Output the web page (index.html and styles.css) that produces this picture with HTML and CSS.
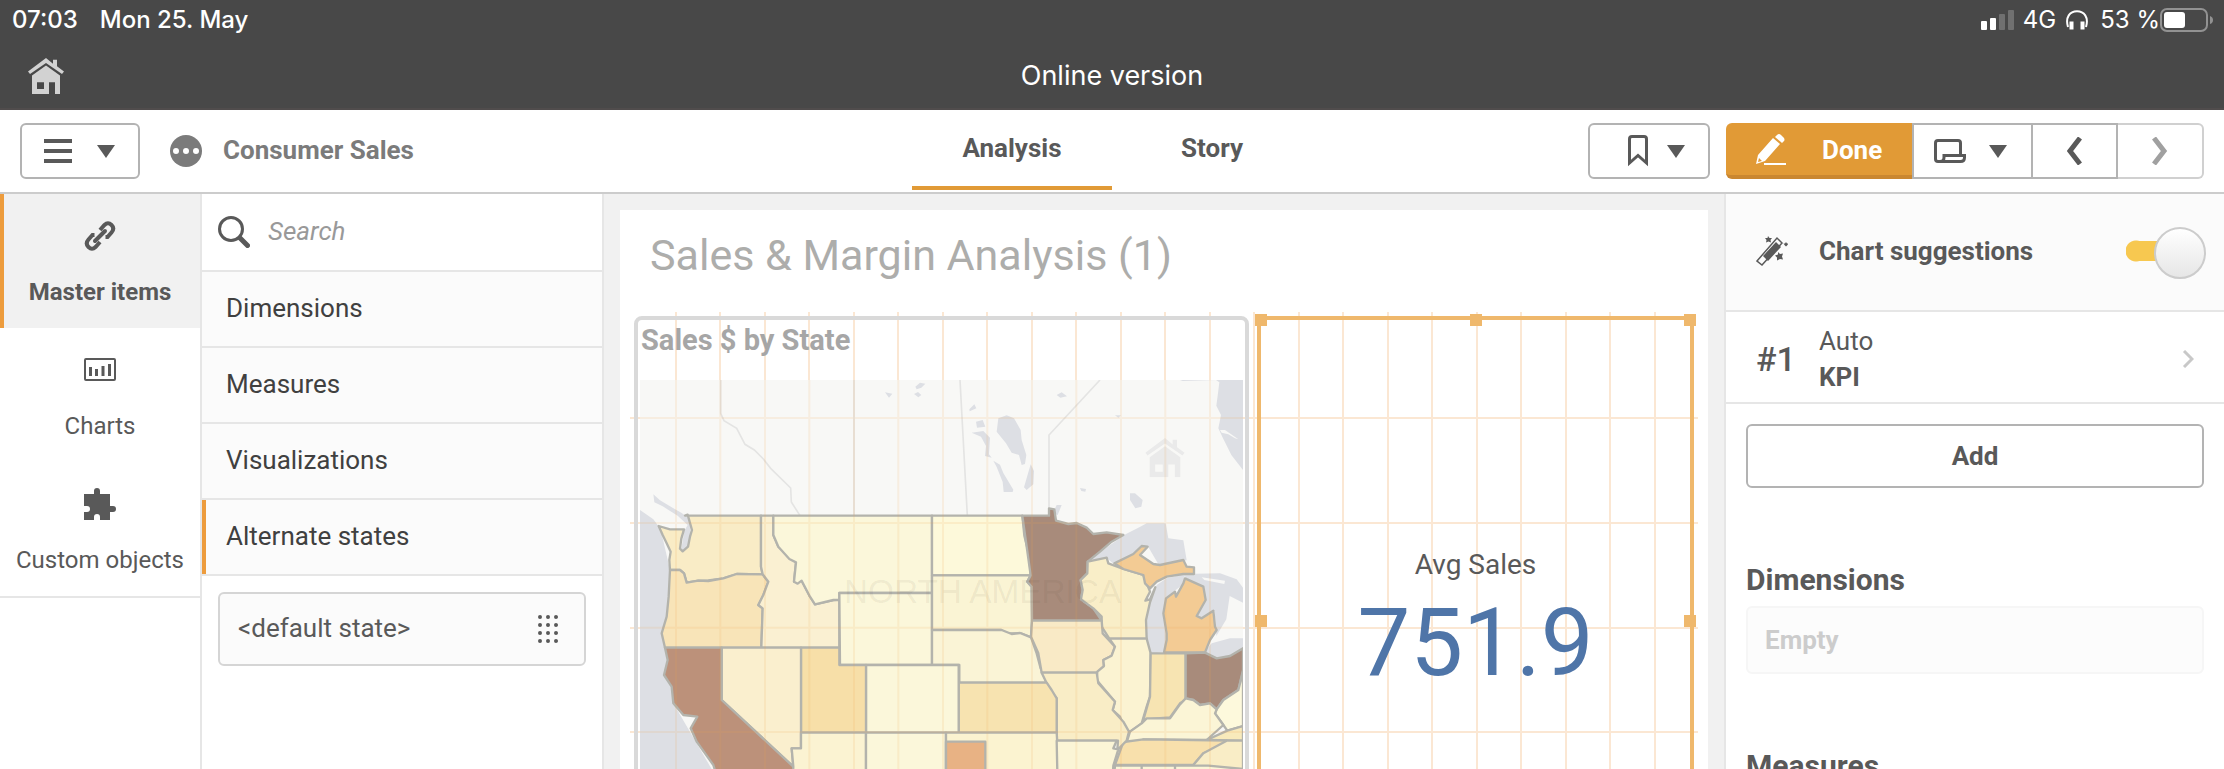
FILE: index.html
```html
<!DOCTYPE html>
<html lang="en">
<head>
<meta charset="utf-8">
<title>Consumer Sales</title>
<link rel="stylesheet" href="styles.css">
</head>
<body>
<svg width="0" height="0" class="defs" aria-hidden="true">
  <symbol id="house" viewBox="0 0 36 43" preserveAspectRatio="none">
    <path d="M18 0 0 16l2 3L18 6l16 13 2-3-7-6V2h-4v5z"/>
    <path fill-rule="evenodd" d="M18 9 4 21v22h28V21zM9 29h7v8H9zM21 29h6v14h-6z"/>
  </symbol>
  <symbol id="caret" viewBox="0 0 18 13"><path d="M0 0h18L9 13z"/></symbol>
</svg>

<header class="top">
  <div class="status">
    <div class="status-side"><span>07:03</span><span>Mon 25. May</span></div>
    <div class="status-side status-right">
      <svg width="34" height="20" viewBox="0 0 34 20" fill="#fff"><rect y="11" width="6" height="9" rx="1"/><rect x="9" y="8" width="6" height="12" rx="1"/><g opacity=".22"><rect x="18" y="4" width="6" height="16" rx="1"/><rect x="27" width="6" height="20" rx="1"/></g></svg>
      <span>4G</span>
      <svg class="headphones" width="22" height="20" viewBox="0 0 22 20" fill="none" stroke="#fff"><path d="M2 17C-1 7 4 1.200 11 1.200S23 7 20 17" stroke-width="2"/><path d="M5.500 11.500v8M16.500 11.500v8" stroke-width="4"/></svg>
      <span class="percent">53 %</span>
      <svg width="54" height="24" viewBox="0 0 54 24"><rect x="1" y="1" width="46" height="22" rx="6" fill="none" stroke="#929292" stroke-width="2"/><rect x="4" y="4" width="21" height="16" rx="3" fill="#fff"/><path d="M50 8q3 1 3 4t-3 4z" fill="#929292"/></svg>
    </div>
  </div>
  <div class="titlebar">
    <a class="home" href="#" aria-label="Home"><svg width="36" height="36"><use href="#house"/></svg></a>
    <h1>Online version</h1>
  </div>
</header>

<div class="toolbar">
  <div class="tools-left">
    <button class="btn menu" aria-label="Menu"><svg width="28" height="24" viewBox="0 0 28 24"><path d="M0 2h28M0 12h28M0 22h28" stroke="#595959" stroke-width="4"/></svg><svg width="18" height="13"><use href="#caret"/></svg></button>
    <svg width="32" height="32" viewBox="0 0 32 32"><circle cx="16" cy="16" r="16" fill="#7b7b7b"/><g fill="#fff"><circle cx="6" cy="16" r="3"/><circle cx="16" cy="16" r="3"/><circle cx="26" cy="16" r="3"/></g></svg>
    <span class="app-name">Consumer Sales</span>
  </div>
  <nav class="tabs"><a class="tab active" href="#">Analysis</a><a class="tab" href="#">Story</a></nav>
  <div class="tools-right">
    <button class="btn bookmark" aria-label="Bookmarks"><svg width="20" height="32" viewBox="0 0 20 32"><path d="M1.500 28V4q0-2.500 2.500-2.500h12q2.500 0 2.500 2.500v24L10 20.500z" fill="none" stroke="#595959" stroke-width="3"/></svg><svg width="18" height="13"><use href="#caret"/></svg></button>
    <div class="group">
      <button class="btn done"><svg width="32" height="32" viewBox="0 0 32 32" fill="#fff"><path fill-rule="evenodd" d="M0 30 2 21 17 4l7 6L9 27zM3 24l-1 4 4-1z"/><path d="m19 3 2-2q2-2 4 0l3 3q1 2 0 3l-2 2z"/><path d="M8 29h22v2H8z"/></svg><span>Done</span></button>
      <button class="btn sheets" aria-label="Sheets"><svg width="32" height="24" viewBox="0 0 32 24" fill="none" stroke="#595959" stroke-width="3"><path d="M6 22.500H4q-2.500 0-2.500-2.500V4Q1.500 1.500 4 1.500h20q2.500 0 2.500 2.500v12"/><path d="M10 16.500h20.500v2q0 4-4 4H6q4 0 4-4z"/></svg><svg width="18" height="13"><use href="#caret"/></svg></button>
      <button class="btn step prev" aria-label="Previous sheet"><svg width="16" height="28" viewBox="0 0 16 28"><path d="M13 1 3 14l10 13" fill="none" stroke="#595959" stroke-width="5"/></svg></button>
      <button class="btn step off" aria-label="Next sheet"><svg width="16" height="28" viewBox="0 0 16 28"><path d="m2 1 10 13L2 27" fill="none" stroke="#a0a0a0" stroke-width="5"/></svg></button>
    </div>
  </div>
</div>

<main class="work">
  <nav class="rail">
    <a class="rail-item active" href="#"><svg width="32" height="32" viewBox="0 0 32 32" fill="none" stroke="#595959" stroke-width="4"><path d="M11 21 21 11" stroke-linecap="round"/><path d="m16 10 4.500-5q3.500-3.500 7 0t0 7.500l-4 4.500h-2M16 22l-4.500 5q-3.500 3.500-7 0t0-7.500l4-4.500h2"/></svg><span>Master items</span></a>
    <a class="rail-item" href="#"><svg width="32" height="32" viewBox="0 0 32 32"><rect x="1" y="5" width="30" height="21" rx="1" fill="none" stroke="#595959" stroke-width="2"/><path d="M6.500 13v9M12.500 15v7M19 12v10M25.500 10v12" stroke="#595959" stroke-width="3"/></svg><span>Charts</span></a>
    <a class="rail-item" href="#"><svg width="32" height="32" viewBox="0 0 32 32" fill="#595959"><path d="M0 6h10V3q0-3 3-3t3 3v3h10v12h3q3 0 3 3t-3 3h-3v8H16v-3q0-3-3-3t-3 3v3H0v-8h3q3 0 3-3t-3-3H0z"/></svg><span>Custom objects</span></a>
  </nav>

  <section class="assets">
    <label class="search"><svg width="32" height="32" viewBox="0 0 32 32" fill="none" stroke="#595959"><circle cx="13" cy="13" r="11.500" stroke-width="3"/><path d="m22 22 7.500 7.500" stroke-width="5" stroke-linecap="round"/></svg><input type="search" placeholder="Search" aria-label="Search"></label>
    <button class="row">Dimensions</button>
    <button class="row">Measures</button>
    <button class="row">Visualizations</button>
    <button class="row open">Alternate states</button>
    <div class="state"><span>&lt;default state&gt;</span>
      <svg width="20" height="28" viewBox="0 0 20 28"><path d="M2 2h.01M10 2h.01M18 2h.01M2 10h.01M10 10h.01M18 10h.01M2 18h.01M10 18h.01M18 18h.01M2 26h.01M10 26h.01M18 26h.01" stroke="#595959" stroke-width="4" stroke-linecap="round"/></svg>
    </div>
  </section>

  <section class="stage">
    <div class="sheet">
      <h2>Sales &amp; Margin Analysis (1)</h2>
      <div class="board">
        <svg class="grid" viewBox="0 0 1068 640" preserveAspectRatio="none" aria-hidden="true"><path shape-rendering="crispEdges" d="M46 0v640M90 0v640M135 0v640M179 0v640M224 0v640M268 0v640M313 0v640M357 0v640M402 0v640M446 0v640M491 0v640M535 0v640M580 0v640M624 0v640M669 0v640M713 0v640M758 0v640M802 0v640M847 0v640M891 0v640M936 0v640M980 0v640M1025 0v640M0 106h1068M0 211h1068M0 316h1068M0 420h1068M0 525h1068"/></svg>
        <article class="card map-card">
          <h3>Sales $ by State</h3>
          <svg class="map" viewBox="60 30 1809 1620" preserveAspectRatio="xMinYMin slice" role="img" aria-label="Map of sales by state">
            <rect x="60" y="30" width="1809" height="1620" fill="#f8f8f6"/>
            <g fill="#dddfe4">
              <path d="M60 420 100 448 122 478 150 600 160 1000 300 1240H60z"/>
              <path d="m100 373 20 18 30 18 35 20 28 20-4 90-14 12-12-8 10-60 10-18-30-28-45-28-25-12z"/>
              <path d="M1680 30h189v270l-35-45-25-50-14-30 8-40-14-28 4-30 5-40-10-7-100 3z"/>
              <path d="m1135 145 25-9 22 9 20 35 3 30 14 45-4 27-10 3-8-30-22-7-17-28-28-35z"/>
              <path d="m1068 155 20-5 8 20-25 3zM1048 118l15-15 6 12-20 9zM1055 188l35-5 20 20-3 50 8 10-20-5 3-30-15-28zM1120 272l20 12 10 25 30 50-2 7h-27l-3-30-18-45zM1232 283l10 20-2 40-20 17-8-8 10-35zM1310 75l15-8 16 12-20 4zM1530 370l15 0 23 20-4 20-18 5-16-25zM1485 136h18l-8 7zM1380 354l18 3-2 8-12-2zM1310 405l15 0-12 30-15-5zM882 72l12-6 10 9-9 7zM886 50l14-12 16 3-12 12-14 5zM795 67l22 4-10 12z"/>
              <path d="m1403 575 60-45 55-38 40-20 22-12h57l8 45 45 6 10 60-80 20-35-60-105 50-20-18z"/>
              <path d="m1590 700 20-55 30-20 55-13-5 30-50 40-12 50 15 70-13 43-35 7-15-40-2-60z"/>
              <path d="m1690 612 110-2 50 18 19 25v45l-40-20-10 70-30 50-5-75-40 22-15-8 25-40-5-45-50-28z"/>
              <path d="m1750 850 25-30 55-15h39v35l-40 20-40 7z"/>
            </g>
            <path d="m1800 180 15 0 40 28-10-3-20-12-20-5zM1745 622l70 10-2 10-60-12z" fill="#f8f8f6"/>
            <g fill="none" stroke="#e4e4e3" stroke-width="5"><path d="M302 30v100l10 22 38 23 25 48 28 17 27 27 22 28 60 59 2 42 26 41M702 30v407M1020 30l22 407M1287 415V195L1440 30"/></g>
            <g class="states">
              <path fill="#f9ecc6" d="M195 437H423V590l5 23-78-1-40 13-45 6-30 1-35 6-8-28-12-10H150l-2-30 4-25-12-25-12-25-12-27 34 10h42l-8 28-4 30 8 8 16-14 6-30 6-20-8-28-5-18z"/>
              <path fill="#f8e4b8" d="m150 600 30 0 12 10 8 28 35-6 30 1 45-8 40-13 78 1 17 22-15 40-15 30 13 10-4 118H135l-10-43 15-50 6-60z"/>
              <path fill="#faf0d2" d="M423 437h37v58l15 35 53 47-6 58 23-3 25 48 15 23 55-13h18V833H424l4-118-13-10 15-30 15-40-17-22-5-23z"/>
              <path fill="#fbf7da" d="M460 437H936V669H658v20l-18 1-55 13-15-23-25-48-12 9-11-6 6-58-20-10-33-37-15-35z"/>
              <path fill="#fbf7da" d="M658 669H936V885H660z"/>
              <path fill="#fdf9da" d="M936 437h271l6 60 15 60 4 59H936z"/>
              <path fill="#faf4d4" d="M936 616h296l-10 19 13 15 1 102-3 50-30-12h-40l-20-10H936z"/>
              <path fill="#faf4d6" d="M936 780h209l30 12 25-3 33 13 17 48 12 45 18 43H1018V885h-82z"/>
              <path fill="#a88b7b" d="M1207 437h80v-22l16 3 5 34 37 10 25-3 30 14 20 19 40-5 50 8-35 20-35 30-37 30-1 35-20 20 6 30-5 28 37 27 25 37H1236l-1-102-13-15 10-19-12-86z"/>
              <path fill="#f9eec8" d="m1403 575 57-12 5 17 45 17 60 18 10 25 10 25-14 27 14-4 16-36-16 45-12 53 2 56h-112l-23-36v-30l-25-25-37-27 5-28-6-30 20-20z"/>
              <path fill="#f9eac6" d="M1236 752h209l3 38 37 40-10 27-25 13 2 20-20 18H1265l-10-58-22-50z"/>
              <path fill="#f3cb94" d="m1483 580 57-28 25-24 18 2-23 25 40 27 20 3 70-15 10 20 22 2v20h-32l-50 8-30 15-20 20-15-15-5-25-60-18z"/>
              <path fill="#f3cb94" d="m1695 625 55 25 7 40-27 48 15 7 35-23 5 48 5 10-20 30-15 37H1632l8-37V790l-10-60 8-45 27-20 3 15 22-40z"/>
              <path fill="#fbf3d2" d="M1468 806h112l12 44-2 130-10 30-15 50-35 25-15-5-15-40-22-20 7-25-55-65 2-25 20-17-2-18 25-13 10-27z"/>
              <path fill="#f7e4b2" d="M1592 850h105v140l-17 10-30 42-40 3-40 5 20-70z"/>
              <path fill="#a88b7b" d="m1697 850 58-2 35 17 40-7 39-23v65l-14 60-45 30-20 28-20-18-30 5-20-15-23-5z"/>
              <path fill="#fdf9dc" d="m1869 905-14 55-45 30-20 28-5 12 25 35 12 17 47-14z"/>
              <path fill="#fbf5d6" d="m1697 985 23 5 20 15 30-5 20 18-5 12 25 35-50 45-190-2v9h-50l10-32 35-25 15-15 70 0 30-42z"/>
              <path fill="#f8eabb" d="m1760 1110 62-28 47-14v44z"/>
              <path fill="#f8e0ac" d="m1510 1116 60-8 250 4-30 23-40 15-30 35h-235z"/>
              <path fill="#f9edc6" d="m1820 1112 49 0v90h-152l3-17 30-35z"/>
              <path fill="#f9edc6" d="M1265 908h165l5 32 50 55-7 25 32 35 17 30-7 27-28 28 2-28H1310V985l-20-25z"/>
              <path fill="#f7e3b0" d="M1016 938h264l15 22 15 25v103H1016z"/>
              <path fill="#fbf7da" d="M738 885h278v203H738z"/>
              <path fill="#f7dfa8" d="M543 833h115v52h80v203H543z"/>
              <path fill="#faefce" d="M305 833h238v302h-28l5 55L305 990z"/>
              <path fill="#bc917a" d="M135 833h170v157l215 200 10 60H300l-20-65-50-70-18-40 20-35-42-5-30-35-5-50-23-35 11-45z"/>
              <path fill="#fbf3d2" d="M543 1088h195v562H500l20-460-5-55h28z"/>
              <path fill="#fbf7da" d="M738 1088h240v562H738z"/>
              <path fill="#fbf3d0" d="M978 1088h332l7 112v150H978z"/>
              <path fill="#e8b284" d="M978 1115h118v235H978z"/>
              <path fill="#fbf5d6" d="M1310 1112h180l-10 23 15 3-15 49-10 160h-155z"/>
              <path fill="#fbf5d6" d="M1485 1187h80v200h-100zM1565 1187h100v200h-100zM1665 1187h100l104 10v190h-204z"/>
            </g>
            <g fill="#eaeaea"><use href="#house" x="1576" y="204" width="118" height="118"/></g>
            <text x="672" y="700" class="continent">NORTH AMERICA</text>
            <path class="map-grid" d="M168 30v1620M301 30v1620M435 30v1620M568 30v1620M702 30v1620M835 30v1620M969 30v1620M1102 30v1620M1236 30v1620M1369 30v1620M1503 30v1620M1636 30v1620M1770 30v1620M60 144h1809M60 459h1809M60 773h1809M60 1086h1809"/>
          </svg>
        </article>
        <article class="card kpi">
          <span class="kpi-label">Avg Sales</span>
          <span class="kpi-value">751.9</span>
          <i class="handle tl"></i><i class="handle tc"></i><i class="handle tr"></i><i class="handle ml"></i><i class="handle mr"></i>
        </article>
      </div>
    </div>
  </section>

  <aside class="props">
    <div class="suggest">
      <svg width="32" height="30" viewBox="0 0 32 30"><g fill="#595959"><path d="m7 20 13-14 5 5-13 14z"/><path d="m12 0 1.500 2h2.500l-1.500 2 .5 2.500-2.500-1-2.500 1 .5-2.500L9 2l2.500 0zM30 6l1 1.500h1.500l-1 1.500-1.500 1.500-1.500-1.500-1-1.500h1.500zM22 16l2 2 3-.5-1 3 1 3-3-.5-3 1.500v-3l-2-2 3-1z"/></g><path d="m1 25 20-23 5 5L6 29z" fill="none" stroke="#595959" stroke-width="1.500"/></svg>
      <label for="sug">Chart suggestions</label>
      <input id="sug" class="switch" type="checkbox" role="switch" checked>
    </div>
    <button class="viz"><span class="rank">#1</span><span class="names"><span>Auto</span><b>KPI</b></span><svg width="12" height="18" viewBox="0 0 12 18"><path d="m2 1 8 8-8 8" fill="none" stroke="#c8c8c8" stroke-width="3"/></svg></button>
    <button class="btn add">Add</button>
    <h4>Dimensions</h4>
    <div class="empty">Empty</div>
    <h4>Measures</h4>
  </aside>
</main>
</body>
</html>
```
FILE: styles.css
```css
* { box-sizing: border-box; }
body {
  margin: 0;
  height: 100vh;
  overflow: hidden;
  display: flex;
  flex-direction: column;
  background: #fff;
  color: #595959;
  fill: #595959;
  font-family: Roboto, "Liberation Sans", sans-serif;
  font-size: 26px;
  line-height: 32px;
}
h1, h2, h3, h4 { margin: 0; }
a { color: inherit; text-decoration: none; }
button { font: inherit; color: inherit; background: none; border: 0; padding: 0; margin: 0; text-align: left; }
svg { display: block; flex: none; }
.defs { position: absolute; }

.top { background: #484848; color: #fff; font-family: Inter, "Liberation Sans", sans-serif; border-bottom: 2px solid #504c4c; }
.status { height: 40px; display: flex; justify-content: space-between; padding: 0 10px 0 12px; font-size: 24px; font-weight: 500; }
.status-side { display: flex; align-items: center; gap: 22px; }
.status-right { gap: 8px; }
.status-right span { font-weight: 400; }
.headphones { margin-left: 2px; }
.status-right .percent { margin: 0 -8px 0 4px; }
.titlebar { height: 68px; display: grid; grid-template-columns: 1fr auto 1fr; padding: 0 28px; }
.home { padding-top: 18px; justify-self: start; }
.home svg { fill: #d2d2d2; }
.titlebar h1 { font-size: 27px; font-weight: 400; line-height: 32px; padding-top: 20px; }

.toolbar { display: grid; grid-template-columns: 1fr auto 1fr; align-items: center; height: 84px; padding: 0 20px; border-bottom: 2px solid #ccc; }
.tools-left, .tools-right { display: flex; align-items: center; }
.tools-right { justify-content: flex-end; gap: 16px; }
.btn { height: 56px; border: 2px solid #b3b3b3; border-radius: 6px; display: flex; align-items: center; background: #fff; font-weight: 700; }
.menu { width: 120px; padding-left: 22px; gap: 25px; margin-right: 30px; }
.app-name { margin-left: 21px; padding-bottom: 2px; color: #7b7b7b; font-weight: 700; }
.tabs { display: flex; align-self: stretch; }
.tab { width: 200px; text-align: center; font-weight: 700; padding-top: 22px; margin-bottom: 2px; border-bottom: 4px solid transparent; }
.tab.active { border-color: #e19a36; }
.bookmark { width: 122px; padding-left: 38px; gap: 19px; }
.group { display: flex; }
.group .btn { border-radius: 0; }
.group .done { width: 186px; background: #e19a36; border: 0; border-bottom: 4px solid #ca8730; border-radius: 6px 0 0 6px; color: #fff; padding: 2px 0 0 30px; gap: 34px; }
.group .sheets { width: 119px; padding-left: 20px; gap: 23px; border-right: 0; }
.group .step { width: 86px; justify-content: center; }
.group .prev { width: 87px; }
.group .off { border-left: 0; border-color: #d0d0d0; border-radius: 0 6px 6px 0; }

.work { flex: 1; min-height: 0; display: grid; grid-template-columns: 202px 402px 1fr 500px; grid-template-rows: 100%; }
.work > * { overflow: hidden; }
.rail { border-right: 2px solid #e6e6e6; font-size: 24px; }
.rail-item { height: 134px; display: flex; flex-direction: column; align-items: center; gap: 24px; padding-top: 26px; }
.rail-item:last-child { height: 136px; border-bottom: 2px solid #e6e6e6; }
.rail-item.active { background: #f1f1f1; font-weight: 700; box-shadow: inset 4px 0 #ed9c3d; }

.assets { border-right: 2px solid #e6e6e6; }
.search { height: 78px; display: flex; align-items: center; gap: 18px; padding: 0 16px; border-bottom: 2px solid #e6e6e6; }
.search input { flex: 1; min-width: 0; border: 0; padding: 0 0 2px; font: inherit; font-style: italic; background: none; }
.search input::placeholder { color: #999; opacity: 1; }
.row { display: block; width: 100%; height: 76px; padding: 0 0 2px 24px; background: #fbfbfb; border-bottom: 2px solid #e6e6e6; color: #404040; }
.row.open { box-shadow: inset 4px 0 #ed9c3d; }
.state { margin: 16px; height: 74px; padding: 0 26px 0 18px; display: flex; align-items: center; justify-content: space-between; border: 2px solid #d5d5d5; border-radius: 6px; background: #fbfbfb; }
.state span { padding-bottom: 2px; }

.stage { background: #f1f1f1; padding: 16px 16px 0; }
.sheet { background: #fff; height: 100%; padding: 0 10px; }
.sheet h2 { height: 102px; padding: 18px 0 0 20px; font-size: 43px; line-height: 54px; font-weight: 400; color: #adadab; }
.board { position: relative; display: grid; grid-template-columns: 615fr 437fr; gap: 8px; padding: 4px 4px 0; height: 640px; grid-template-rows: 610px; }
.card { position: relative; overflow: hidden; display: flex; flex-direction: column; }
.map-card { border: 4px solid #d9d9d9; border-radius: 8px; }
.map-card h3 { height: 60px; padding: 2px 0 0 3px; font-size: 29px; line-height: 36px; color: #a6a6a6; }
.map { flex: 1; min-height: 0; margin: 0 2px 2px; }
.states path { stroke: #b3b3ac; stroke-width: 7; stroke-linejoin: round; }
.map-grid { fill: none; stroke: #f0a050; stroke-opacity: .13; stroke-width: 6; }
.continent { font: 100px "Liberation Sans", Arial, sans-serif; fill: #504030; fill-opacity: .08; }
.kpi { border: 4px solid #efb86c; align-items: center; justify-content: center; overflow: visible; padding-top: 8px; }
.kpi-label { font-size: 28px; line-height: 36px; }
.kpi-value { font-size: 94px; line-height: 120px; color: #4f75a8; }
.handle { position: absolute; z-index: 2; width: 12px; height: 12px; background: #efb86c; }
.tl, .tc, .tr { top: -6px; }
.ml, .mr { top: calc(50% - 6px); }
.tl, .ml { left: -6px; }
.tr, .mr { right: -6px; }
.tc { left: calc(50% - 6px); }
.grid { position: absolute; inset: 0; width: 100%; height: 640px; fill: none; stroke: #f0a050; stroke-opacity: .25; stroke-width: 2; pointer-events: none; }

.props { border-left: 2px solid #e6e6e6; }
.suggest { height: 118px; display: flex; align-items: center; padding: 0 18px 2px 30px; background: #fbfbfb; border-bottom: 2px solid #e6e6e6; font-weight: 700; }
.suggest label { flex: 1; margin-left: 31px; }
.switch { appearance: none; width: 80px; height: 48px; margin: 0; display: flex; justify-content: flex-end; background: radial-gradient(circle at 10px 24px, #f7c850 10px, transparent 11px), linear-gradient(#f7c850, #f7c850) 10px 50% / 50px 20px no-repeat; }
.switch::before { content: ""; width: 48px; height: 48px; border-radius: 50%; border: 2px solid #ccc; background: linear-gradient(#fff, #e6e6e6); }
.viz { width: 100%; height: 92px; display: flex; align-items: center; padding: 4px 30px 0; border-bottom: 2px solid #e6e6e6; }
.rank { width: 63px; font-size: 34px; font-weight: 500; }
.names { flex: 1; display: flex; flex-direction: column; line-height: 36px; }
.add { height: 64px; margin: 20px; width: calc(100% - 40px); justify-content: center; }
.props h4 { margin: 72px 20px 6px; font-size: 30px; line-height: 40px; }
.empty { margin: 0 20px; height: 68px; padding: 0 17px; display: flex; align-items: center; border: 2px solid #f6f6f6; border-radius: 6px; background: #fcfcfc; color: #ccc; font-weight: 700; }
```
